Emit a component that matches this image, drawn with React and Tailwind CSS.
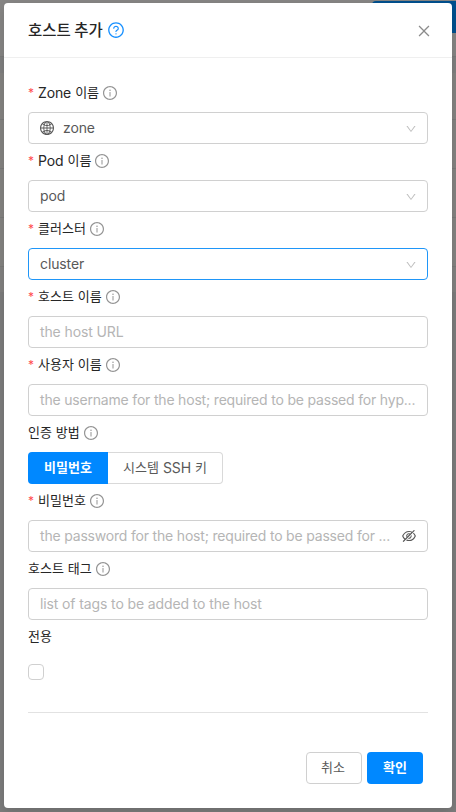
import {
  AiOutlineClose,
  AiOutlineDown,
  AiOutlineEyeInvisible,
  AiOutlineGlobal,
  AiOutlineInfoCircle,
  AiOutlineQuestionCircle,
} from 'react-icons/ai';

const latin = "font-['Inter','Noto_Sans_CJK_KR',sans-serif] text-[14px]";
const korean = "font-['Noto_Sans_CJK_KR',sans-serif] text-[13px] [word-spacing:1px] pb-0.5";

function Label({ en, ko, required, info = true }) {
  return (
    <div className="flex h-9 items-center pb-0.5 leading-5 text-[#262626]">
      {required && <span className="w-[10px] font-['Inter',sans-serif] text-[12px] text-[#ff4d4f]">*</span>}
      {en && <span className={`${latin} mr-1 tracking-[-0.12px]`}>{en}</span>}
      <span className={korean}>{ko}</span>
      {info && <AiOutlineInfoCircle className="ml-[3px] size-4 text-[#949494]" />}
    </div>
  );
}

function Select({ value, icon, focused }) {
  return (
    <div
      className={`flex h-8 items-center rounded-[4px] border pl-[11px] pr-[10px] text-[#595959] ${
        focused ? 'border-[#1f96f8]' : 'border-[#d0d0d0]'
      }`}
    >
      {icon}
      <span className={`${latin} flex-1 pb-0.5 tracking-[-0.12px]`}>{value}</span>
      <AiOutlineDown className="mt-px size-3 text-[#bfbfbf]" />
    </div>
  );
}

function Input({ placeholder, suffix, tight }) {
  return (
    <div className="flex h-8 items-center rounded-[4px] border border-[#d0d0d0] px-[11px]">
      <span
        className={`${latin} flex-1 whitespace-nowrap pb-0.5 text-[#b5b5b5] ${
          tight ? 'tracking-[-0.19px]' : 'tracking-[-0.12px]'
        }`}
      >
        {placeholder}
      </span>
      {suffix}
    </div>
  );
}

/* Dimmed table rows of the page that show at both sides of the dialog. */
function Backdrop() {
  return (
    <div className="absolute inset-0 flex flex-col bg-[#7d7d7d]">
      <div className="h-14 bg-[#878685]" />
      <div className="h-[17px] border-t border-[#7b7b7b] bg-[#808080]" />
      <div className="h-[46px] bg-[#858482]" />
      <div className="h-[49px] border-t border-[#7b7b7a] bg-[#858482]" />
      <div className="h-[49px] border-t border-[#7b7b7a] bg-[#858482]" />
      <div className="h-[49px] border-t border-[#7b7b7a] bg-[#858482]" />
      <div className="h-[26px] border-t border-[#7b7b7a] bg-[#838281]" />
      <div className="absolute right-0 top-px h-8 w-[84px] rounded-tl-[4px] bg-[#00508f]" />
    </div>
  );
}

export default function App() {
  return (
    <div className="relative h-[812px] w-[456px] overflow-hidden px-1 pt-[3px]">
      <Backdrop />
      <div className="relative flex h-[805px] flex-col rounded-[4px] bg-white shadow-[0_4px_12px_rgba(0,0,0,0.15)]">
        <header className="flex h-[55px] items-center border-b border-[#efefef] px-6 text-[#262626]">
          <h1 className="pb-0.5 font-['Noto_Sans_CJK_KR',sans-serif] text-[15.5px] font-medium leading-6">호스트 추가</h1>
          <AiOutlineQuestionCircle className="ml-1 size-[18px] text-[#1890ff]" />
          <AiOutlineClose className="ml-auto mr-[-4px] mt-0.5 size-4 text-[#8c8c8c]" />
        </header>
        <main className="px-6 pt-[18px]">
          <Label en="Zone" ko="이름" required />
          <Select value="zone" icon={<AiOutlineGlobal className="ml-[-1px] mr-2 size-4" />} />
          <Label en="Pod" ko="이름" required />
          <Select value="pod" />
          <Label ko="클러스터" required />
          <Select value="cluster" focused />
          <Label ko="호스트 이름" required />
          <Input placeholder="the host URL" />
          <Label ko="사용자 이름" required />
          <Input tight placeholder="the username for the host; required to be passed for hyp..." />
          <Label ko="인증 방법" />
          <div className="flex h-8">
            <button className={`${korean} w-20 rounded-l-[4px] bg-[#0088ff] font-bold text-white`}>비밀번호</button>
            <button className="flex w-[115px] items-center justify-center gap-1 rounded-r-[4px] border border-l-0 border-[#d9d9d9] text-[#595959]">
              <span className={korean}>시스템</span>
              <span className={`${latin} pb-px tracking-[-0.12px]`}>SSH</span>
              <span className={korean}>키</span>
            </button>
          </div>
          <Label ko="비밀번호" required />
          <Input
            tight
            placeholder="the password for the host; required to be passed for ..."
            suffix={<AiOutlineEyeInvisible className="mr-[-1px] size-4 text-[#595959]" />}
          />
          <Label ko="호스트 태그" />
          <Input placeholder="list of tags to be added to the host" />
          <Label ko="전용" info={false} />
          <div className="mt-2 size-4 rounded-[4px] border border-[#d0d0d0]" />
          <hr className="mt-8 border-[#e2e2e2]" />
          <div className="mt-[39px] flex justify-end gap-[5px] pr-[5px]">
            <button className={`${korean} h-8 w-14 rounded-[4px] border border-[#d0d0d0] pr-0.5 text-[#595959]`}>취소</button>
            <button className={`${korean} h-8 w-14 rounded-[4px] bg-[#0088ff] font-bold text-white`}>확인</button>
          </div>
        </main>
      </div>
    </div>
  );
}
